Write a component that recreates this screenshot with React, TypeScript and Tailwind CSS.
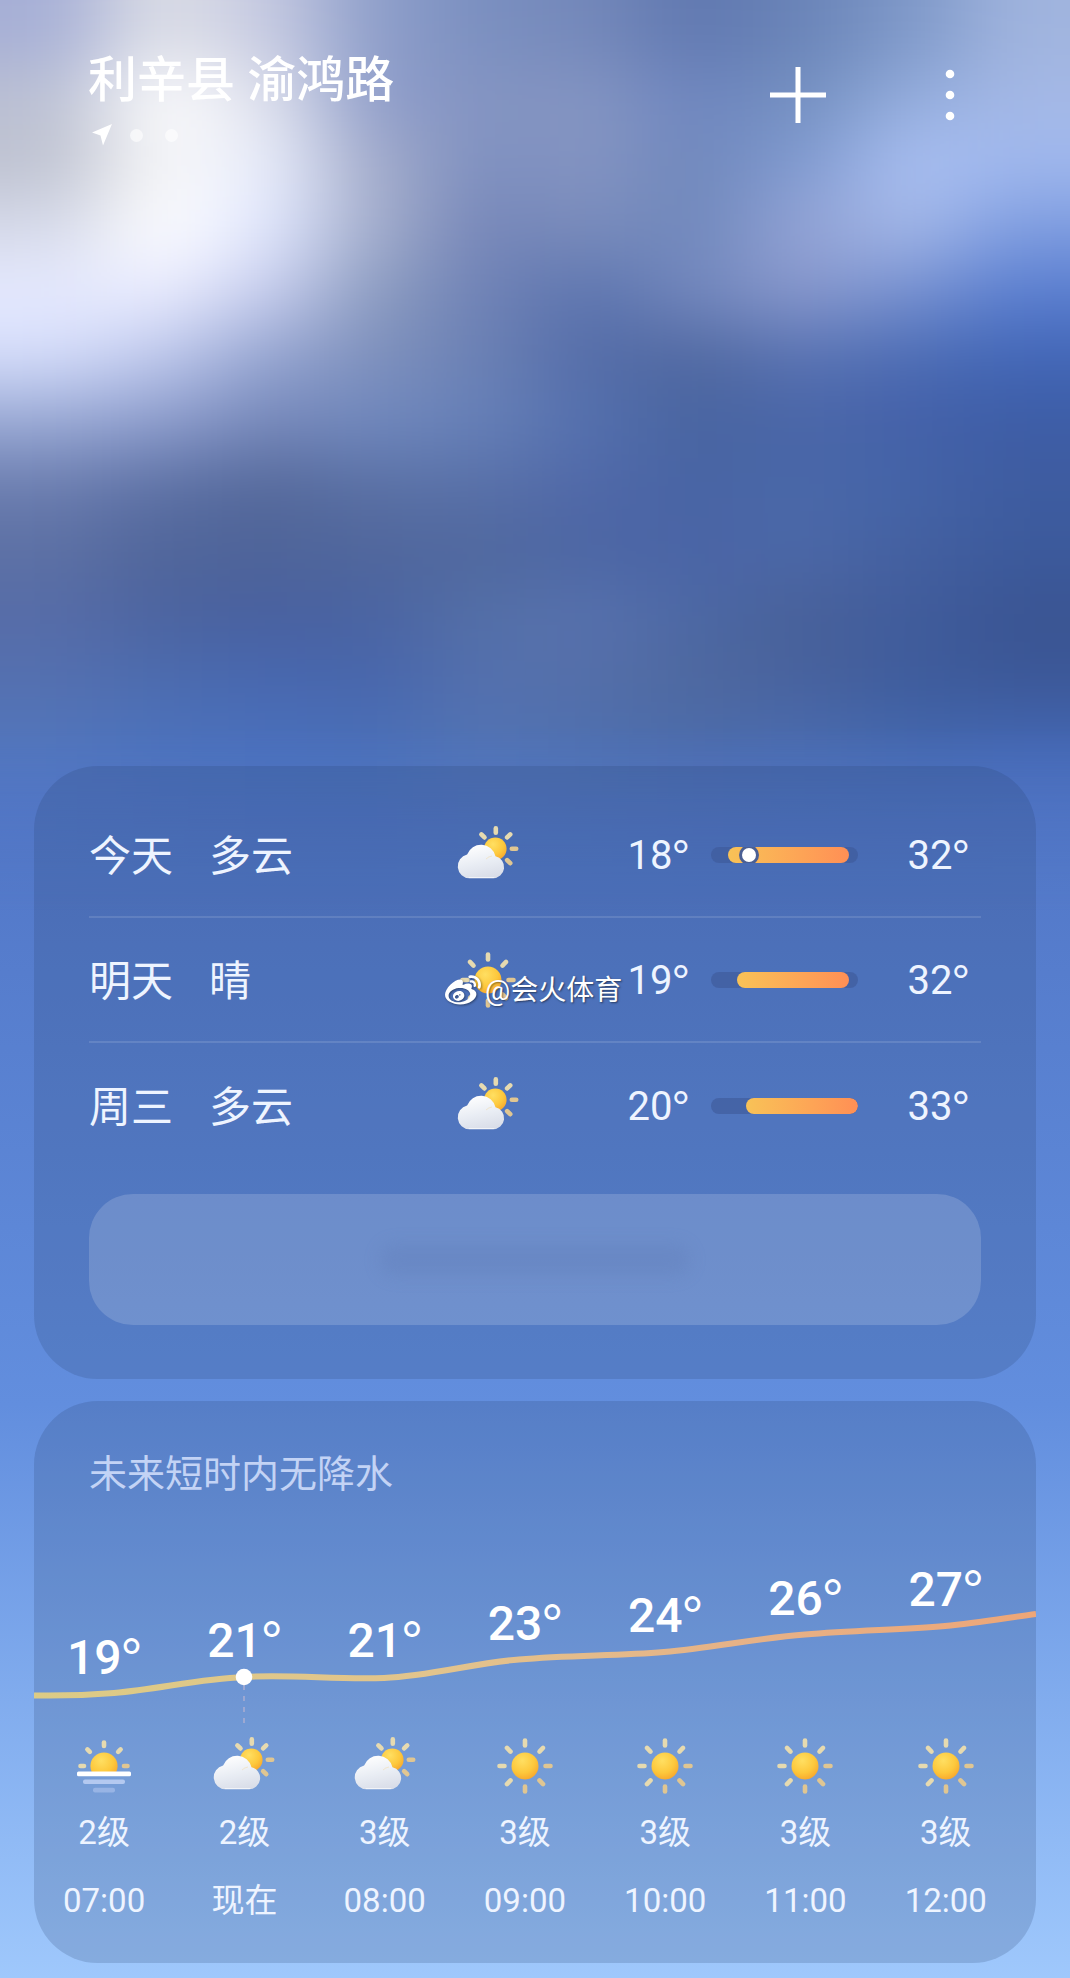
import {useId} from "react";
import {FaWeibo} from "react-icons/fa";

type Weather = "cloudy" | "sunny" | "sunrise";

interface Day {
    name: string;
    text: string;
    icon: Weather;
    low: number;
    high: number;
    now?: number;
}

interface Hour {
    time: string;
    temp: number;
    icon: Weather;
    wind: string;
}

const days: Day[] = [
    {name: "今天", text: "多云", icon: "cloudy", low: 18, high: 32, now: 20.4},
    {name: "明天", text: "晴", icon: "sunny", low: 19, high: 32},
    {name: "周三", text: "多云", icon: "cloudy", low: 20, high: 33},
];

const hours: Hour[] = [
    {time: "07:00", temp: 19, icon: "sunrise", wind: "2级"},
    {time: "现在", temp: 21, icon: "cloudy", wind: "2级"},
    {time: "08:00", temp: 21, icon: "cloudy", wind: "3级"},
    {time: "09:00", temp: 23, icon: "sunny", wind: "3级"},
    {time: "10:00", temp: 24, icon: "sunny", wind: "3级"},
    {time: "11:00", temp: 26, icon: "sunny", wind: "3级"},
    {time: "12:00", temp: 27, icon: "sunny", wind: "3级"},
];

const SCALE_MIN = 16;
const SCALE_MAX = 33;

// colour cells of the sky, blurred together below
const sky = [
    ["#a6afd6", "#dcdee6", "#c6cae2", "#8f9fca", "#7a8fc0", "#7488ba", "#6078b0", "#6a84b8", "#7e98c8", "#a0b4de"],
    ["#bcc1d4", "#ffffff", "#dfe1ec", "#8f9dca", "#8494c2", "#8495c2", "#6f86c0", "#7490c0", "#93acdc", "#a4b8e6"],
    ["#bec2d0", "#f6f6f7", "#eaeefc", "#a4acca", "#7e90c0", "#8494c2", "#7088bc", "#809ad0", "#aac0f2", "#a0b8ee"],
    ["#d6daea", "#ffffff", "#e2e8ff", "#a4aecc", "#7686b8", "#7a8cbc", "#7088bc", "#94a4d6", "#a4b8e8", "#7f9de0"],
    ["#e6eaff", "#eaecff", "#c8ceee", "#8c9cc0", "#6f82b6", "#5c74ae", "#7488be", "#8898cc", "#7690d0", "#5a7ed0"],
    ["#d4dcfa", "#bec8ec", "#94a4d0", "#7e90bc", "#6a80b4", "#546ca8", "#5068a0", "#5872b2", "#4c6cb4", "#4266b6"],
    ["#98a8d4", "#8c9ccc", "#7688ba", "#7088be", "#6680b8", "#5470ae", "#4864a0", "#4a66a8", "#4460a8", "#3d5da6"],
    ["#6a7cae", "#5c70a4", "#54689a", "#5a70a4", "#5870a8", "#5068a8", "#4864a4", "#4a68a8", "#4464a8", "#3e5ca0"],
    ["#5c70a4", "#50659a", "#4e6499", "#50669c", "#50689e", "#4c66a4", "#4a64a6", "#4c68a8", "#4460a0", "#3c5a9c"],
    ["#566ca8", "#4c64a0", "#4860a0", "#4a64a2", "#5470a8", "#5872ae", "#4c68a4", "#486098", "#405c9c", "#3a5492"],
    ["#5470b0", "#4c6cb0", "#4868b0", "#4866ac", "#5470ae", "#546ea8", "#4e689e", "#48629e", "#3e5c9c", "#3c5898"],
    ["#5276bc", "#4c72bc", "#4a70bc", "#4a70b8", "#5274b4", "#4e70b0", "#4c6cac", "#4a6cb0", "#4468ae", "#4468b4"],
    ["#5276c4", "#4e74c2", "#4c72c0", "#4c72be", "#5074bc", "#5074ba", "#4e70ba", "#4c70bc", "#4c70be", "#4c70c0"],
    ["#5276c4", "#5076c4", "#4e74c4", "#4e74c4", "#5076c4", "#5076c4", "#4e74c4", "#4e74c4", "#4e74c4", "#5076c4"],
];

function Sky() {
    return (
        <svg
            className="absolute inset-x-0 top-0 h-[910px] w-full [mask-image:linear-gradient(to_bottom,black_80%,transparent_100%)]"
            viewBox="0 0 1070 910"
            preserveAspectRatio="none"
            aria-hidden="true"
        >
            <defs>
                <filter
                    id="sky-blur"
                    filterUnits="userSpaceOnUse"
                    x="-200"
                    y="-200"
                    width="1470"
                    height="1310"
                    colorInterpolationFilters="sRGB"
                >
                    <feGaussianBlur stdDeviation="46 33"/>
                </filter>
            </defs>
            <g filter="url(#sky-blur)">
                {sky.map((row, r) => row.map((color, c) => {
                    const x = c === 0 ? -200 : c * 107;
                    const y = r === 0 ? -200 : r * 65;
                    const right = c === 9 ? 1270 : (c + 1) * 107 + 1;
                    const bottom = r === 13 ? 1110 : (r + 1) * 65 + 1;
                    return <rect key={`${r}-${c}`} x={x} y={y} width={right - x} height={bottom - y} fill={color}/>;
                }))}
            </g>
        </svg>
    );
}

interface RaysProps {
    cx: number;
    cy: number;
    inner: number;
    outer: number;
    angles: number[];
}

function Rays({cx, cy, inner, outer, angles}: RaysProps) {
    return (
        <g stroke="#e6dab0" strokeWidth="4.6" strokeLinecap="round">
            {angles.map((angle) => (
                <line
                    key={angle}
                    x1={cx}
                    x2={cx}
                    y1={cy - inner}
                    y2={cy - outer}
                    stroke={angle > 60 && angle < 200 ? "#e0c692" : undefined}
                    transform={`rotate(${angle} ${cx} ${cy})`}
                />
            ))}
        </g>
    );
}

function WeatherIcon({type}: { type: Weather }) {
    const id = useId();
    const sun = `${id}-sun`;
    const cloud = `${id}-cloud`;
    const clip = `${id}-clip`;

    return (
        <svg className="size-16 shrink-0" viewBox="0 0 64 64" aria-hidden="true">
            <defs>
                <radialGradient id={sun} cx="0.4" cy="0.3" r="0.75">
                    <stop offset="0" stopColor="#ffdf62"/>
                    <stop offset="0.6" stopColor="#fdc83c"/>
                    <stop offset="1" stopColor="#f7a62c"/>
                </radialGradient>
                <linearGradient id={cloud} x1="0.3" y1="0" x2="0.6" y2="1">
                    <stop offset="0" stopColor="#ffffff"/>
                    <stop offset="0.55" stopColor="#e9edf4"/>
                    <stop offset="1" stopColor="#d9dde8"/>
                </linearGradient>
                <clipPath id={clip}>
                    <rect x="0" y="0" width="64" height="38"/>
                </clipPath>
            </defs>
            {type === "sunny" && (
                <>
                    <Rays cx={32} cy={32} inner={20.5} outer={25.5} angles={[0, 45, 90, 135, 180, 225, 270, 315]}/>
                    <circle cx="32" cy="32" r="13.5" fill={`url(#${sun})`}/>
                </>
            )}
            {type === "cloudy" && (
                <>
                    <Rays cx={39.8} cy={25.8} inner={16} outer={20.4} angles={[0, 45, 90, 135, 315]}/>
                    <circle cx="39.3" cy="25.8" r="11.3" fill={`url(#${sun})`}/>
                    <path
                        d="M13.600 55.3a12 12 0 0 1-2.500-23.700A14.800 14.800 0 0 1 39.500 33.200a11.200 11.200 0 0 1-2.800 22.100z"
                        fill={`url(#${cloud})`}
                    />
                    <path d="M36 33a11 11 0 0 0-6 3" fill="none" stroke="#f4d9a0" strokeOpacity="0.5"/>
                    <path d="M13 54.6h25" stroke="#ffffff" strokeOpacity="0.7" strokeLinecap="round"/>
                </>
            )}
            {type === "sunrise" && (
                <>
                    <Rays cx={32} cy={32} inner={20} outer={23.5} angles={[0, 45, 90, 270, 315]}/>
                    <circle cx="32" cy="32" r="13.6" fill={`url(#${sun})`} clipPath={`url(#${clip})`}/>
                    <rect x="5" y="37.6" width="54" height="4.6" rx="1.5" fill="#ffffff"/>
                    <rect x="11" y="45.4" width="42" height="4.6" rx="2" fill="#c9d8f8" fillOpacity="0.75"/>
                    <rect x="21" y="53.8" width="22" height="4.6" rx="2" fill="#b9cbf2" fillOpacity="0.5"/>
                </>
            )}
        </svg>
    );
}

function Degrees({value}: { value: number }) {
    return <>{value}<span className="font-[Lato,sans-serif] font-normal">°</span></>;
}

function TempBar({low, high, now}: { low: number; high: number; now?: number }) {
    const percent = (value: number) => ((value - SCALE_MIN) / (SCALE_MAX - SCALE_MIN)) * 100;

    return (
        <div className="relative h-4 overflow-hidden rounded-full bg-[#3d5997]/60">
            <div
                className="absolute inset-y-0 rounded-full bg-linear-to-r from-[#f8c257] to-[#ff8f55]"
                style={{left: `${percent(low)}%`, right: `${100 - percent(high)}%`}}
            />
            {now !== undefined && (
                <span
                    className="absolute top-px size-[14px] -translate-x-1/2 rounded-full bg-white ring-3 ring-[#4a5f94]"
                    style={{left: `${percent(now)}%`}}
                />
            )}
        </div>
    );
}

function TempCurve() {
    return (
        <svg
            className="absolute inset-x-0 top-0 h-[230px] w-full"
            viewBox="0 0 1002 230"
            preserveAspectRatio="none"
            aria-hidden="true"
        >
            <defs>
                <linearGradient id="curve" gradientUnits="userSpaceOnUse" x1="0" y1="0" x2="1002" y2="0">
                    <stop offset="0" stopColor="#dccb85"/>
                    <stop offset="0.4" stopColor="#e2c48d"/>
                    <stop offset="0.7" stopColor="#e6b287"/>
                    <stop offset="1" stopColor="#eda678"/>
                </linearGradient>
            </defs>
            <path
                d="M0 194.500C30 195 50 194.500 80 192C125 188 165 178 210 176C257 173 303 179 350 177C397 175 440 162 485 158.500C537 154 583 155 630 151C677 147 724 137 771 133.500C818 129 865 129 911 125C942 122 972 117 1002 113"
                fill="none"
                stroke="url(#curve)"
                strokeWidth="6"
            />
            <path d="M210 184v42" stroke="#c9b9cf" strokeOpacity="0.5" strokeWidth="2" strokeDasharray="5 6"/>
            <circle cx="210" cy="176" r="8.300" fill="#ffffff"/>
        </svg>
    );
}

export default function App() {
    return (
        <div
            className="relative min-h-screen overflow-hidden bg-linear-to-b from-[#5176c6] from-40% via-[#628ede] via-71% to-[#9fc8fc] font-[Roboto,'Noto_Sans_CJK_SC',sans-serif] text-[#eef4ff]"
        >
            <Sky/>

            {/* ===== HEADER ===== */}
            <header className="relative flex items-start justify-between pt-[49px] pr-[92px] pl-[88px] text-white">
                <div>
                    <h1 className="text-[49px] leading-[64px] font-medium">利辛县 渝鸿路</h1>
                    <div className="mt-3 flex h-5 items-center gap-[22px]">
                        <svg className="mr-[-4px] h-[22px] w-6" viewBox="0 0 24 22" aria-hidden="true">
                            <path d="M24 0 15 21.500 12.500 11.500 4 8.500Z" fill="currentColor"/>
                        </svg>
                        <span className="size-[13px] rounded-full bg-white/60"/>
                        <span className="size-[13px] rounded-full bg-white/60"/>
                    </div>
                </div>
                <div className="mt-[18px] flex gap-24">
                    <button type="button" aria-label="添加城市" className="size-14">
                        <svg viewBox="0 0 56 56" fill="none" stroke="currentColor" strokeWidth="5">
                            <path d="M28 0v56M0 28h56"/>
                        </svg>
                    </button>
                    <button type="button" aria-label="更多" className="size-14">
                        <svg viewBox="0 0 56 56" fill="currentColor">
                            <circle cx="28" cy="7" r="4.300"/>
                            <circle cx="28" cy="28" r="4.300"/>
                            <circle cx="28" cy="49" r="4.300"/>
                        </svg>
                    </button>
                </div>
            </header>

            <main className="relative flex flex-col gap-[22px] px-[34px] pt-[621px] pb-[14px]">
                {/* ===== DAILY ===== */}
                <section className="relative rounded-[64px] bg-[#2a4070]/20 px-[55px] pt-[27px] pb-[54px]">
                    <ul className="divide-y-2 divide-white/12">
                        {days.map((day) => (
                            <li
                                key={day.name}
                                className="grid h-[125px] grid-cols-[120px_1fr_64px_191px_147px_111px] items-center pr-3 text-[42px]"
                            >
                                <span className="pt-1">{day.name}</span>
                                <span className="pt-1">{day.text}</span>
                                <WeatherIcon type={day.icon}/>
                                <span className="pr-[22px] text-right text-[40px]"><Degrees value={day.low}/></span>
                                <TempBar low={day.low} high={day.high} now={day.now}/>
                                <span className="text-right text-[40px]"><Degrees value={day.high}/></span>
                            </li>
                        ))}
                    </ul>
                    <button
                        type="button"
                        aria-label="查看更多天气"
                        className="mt-[26px] flex h-[131px] w-full items-center justify-center rounded-[44px] bg-white/16"
                    >
                        <span className="h-8 w-[310px] rounded-full bg-[#5a78b4]/25 blur-sm"/>
                    </button>

                    {/* watermark */}
                    <div className="absolute top-[205px] left-[411px] flex items-center gap-1 text-[28px] leading-10 text-white text-shadow-[1px_1px_2px_rgb(0_0_0/0.5)]">
                        <FaWeibo className="size-9 drop-shadow-[1px_1px_1px_rgb(0_0_0/0.4)]" aria-hidden="true"/>
                        <span>@会火体育</span>
                    </div>
                </section>

                {/* ===== HOURLY ===== */}
                <section className="overflow-hidden rounded-[64px] bg-[#2a4070]/20 pt-[46px] pb-10">
                    <h2 className="px-[55px] text-[38px] leading-[54px] text-[#c3d3f5]">未来短时内无降水</h2>
                    <div className="relative">
                        <TempCurve/>
                        <ul className="relative flex">
                            {hours.map((hour) => (
                                <li key={hour.time} className="flex w-[14%] shrink-0 flex-col items-center text-[33px] leading-[44px]">
                                    <div className="h-[233px]" style={{paddingTop: 59 + (27 - hour.temp) * 8.5}}>
                                        <span className="block text-[48px] leading-[56px] font-medium text-white"><Degrees value={hour.temp}/></span>
                                    </div>
                                    <WeatherIcon type={hour.icon}/>
                                    <span className="mt-[13px]">{hour.wind}</span>
                                    <span className="mt-6">{hour.time}</span>
                                </li>
                            ))}
                        </ul>
                    </div>
                </section>
            </main>
        </div>
    );
}
